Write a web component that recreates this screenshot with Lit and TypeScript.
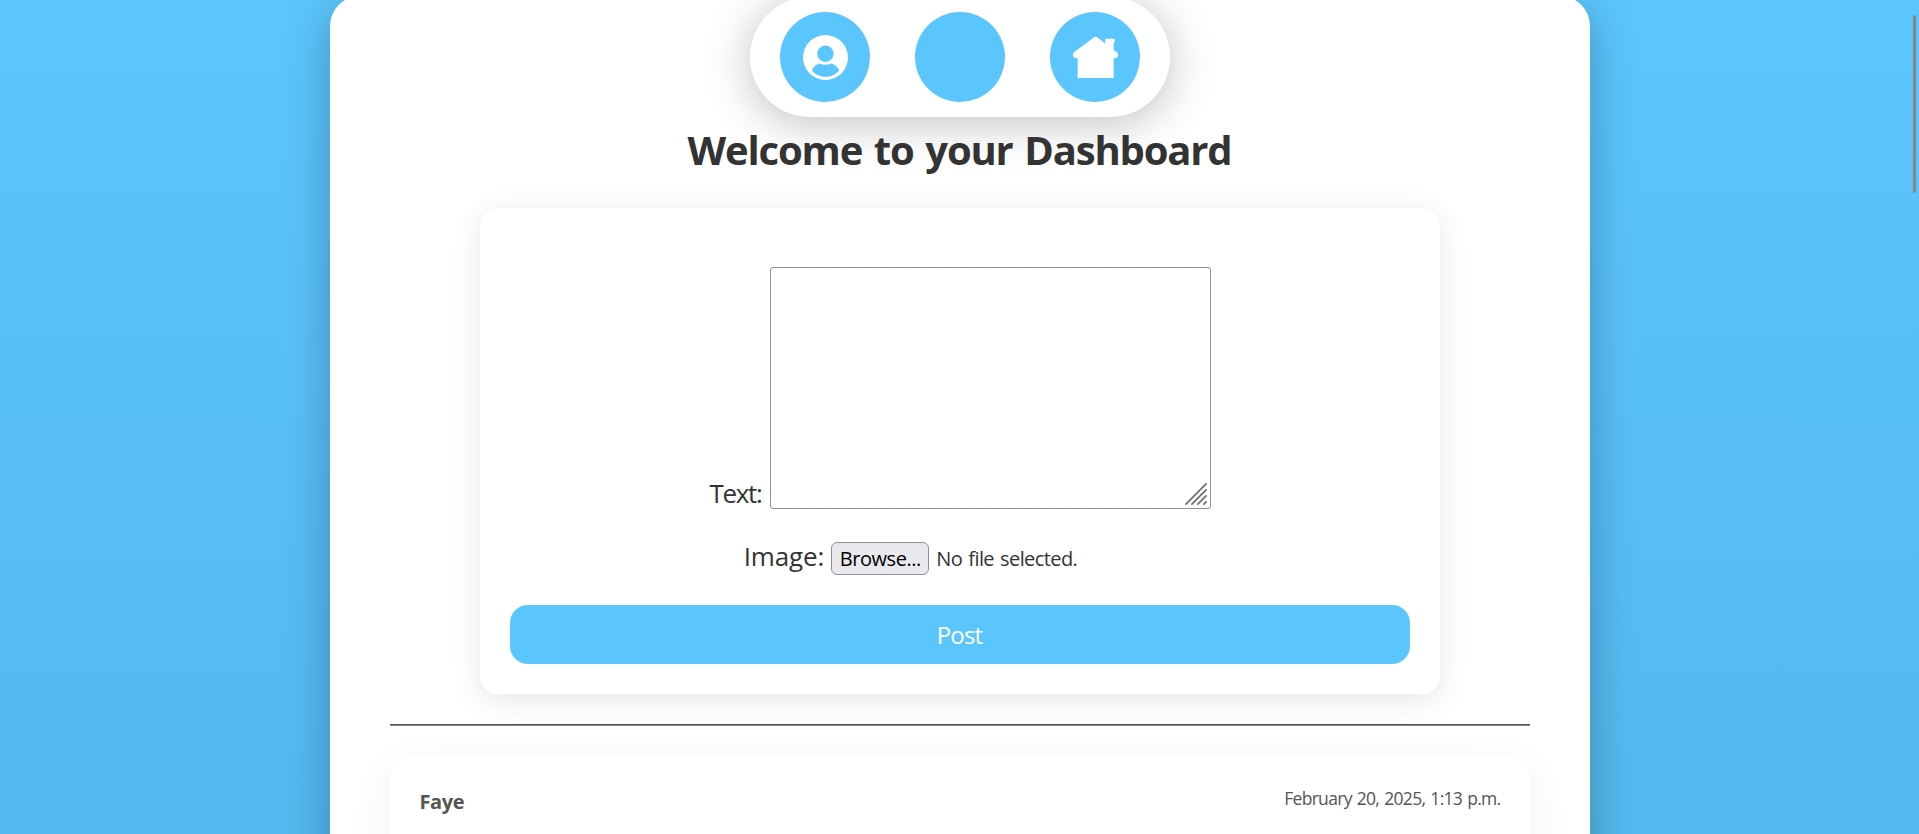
import { LitElement, html, css } from 'lit';
import { customElement } from 'lit/decorators.js';

@customElement('app-root')
export class AppRoot extends LitElement {
  static styles = css`
    :host {
      display: flow-root;
      position: relative;
      height: 834px;
      overflow: hidden;
      background: linear-gradient(#5bc6fd, #53b9ee);
      font-family: 'Open Sans', 'Noto Sans', sans-serif;
      color: #333;
    }
    * { box-sizing: border-box; }
    .page {
      width: 1260px;
      height: 1200px;
      margin: -4px auto 0;
      padding: 127px 60px 0;
      background: #fff;
      border-radius: 30px;
      box-shadow: 0 12px 45px rgba(0, 0, 0, 0.27);
    }
    nav {
      position: absolute;
      z-index: 0;
      top: -3px;
      left: 50%;
      width: 420px;
      height: 120px;
      margin-left: -210px;
      padding: 15px 30px;
      display: flex;
      justify-content: space-between;
      border-radius: 60px;
      background: #fff;
      box-shadow: 0 6px 45px rgba(0, 0, 0, 0.25);
    }
    .nav-link {
      width: 90px;
      height: 90px;
      padding: 1px 0 0 1px;
      border-radius: 50%;
      background: #5bc6fd;
      display: grid;
      place-items: center;
    }
    .nav-link svg { width: 45px; height: 45px; }
    h1 {
      position: relative;
      z-index: 1;
      margin: 0 0 31px;
      font-size: 40px;
      line-height: 54px;
      letter-spacing: -1.17px;
      word-spacing: 2.5px;
      font-weight: 700;
      text-align: center;
    }
    .composer {
      position: relative;
      width: 960px;
      height: 486px;
      margin: 0 auto;
      padding: 59px 30px 30px;
      border-radius: 18px;
      background: #fff;
      box-shadow: 0 6px 30px rgba(0, 0, 0, 0.1);
    }
    .row { display: flex; justify-content: center; }
    .text-row { align-items: flex-end; gap: 8px; padding-left: 1px; }
    .label { font-size: 26px; line-height: 36px; white-space: nowrap; }
    .text-label { letter-spacing: -1.3px; margin-bottom: -2px; }
    .area { position: relative; width: 441px; height: 242px; }
    textarea {
      display: block;
      width: 100%;
      height: 100%;
      resize: none;
      border: 1px solid #8f8f9d;
      border-radius: 3px;
      background: #fff;
      outline: none;
    }
    .grip { position: absolute; right: 4px; bottom: 4px; width: 22px; height: 22px; }
    .file-row { margin-top: 33px; height: 33px; padding-left: 2px; gap: 7px; align-items: center; }
    .image-label { letter-spacing: -0.1px; padding-bottom: 5px; }
    .file { width: 346px; display: flex; align-items: center; gap: 7px; font-size: 20px; letter-spacing: -0.45px; line-height: 31px; }
    .file-name { letter-spacing: -0.6px; word-spacing: 1.5px; }
    .browse {
      width: 98px;
      height: 33px;
      padding: 0;
      border: 1px solid #8f8f9d;
      border-radius: 6px;
      background: #e9e9ed;
      color: #000;
      font: inherit;
      letter-spacing: inherit;
    }
    .submit {
      display: block;
      width: 100%;
      height: 59px;
      margin-top: 30px;
      padding: 0;
      border: 0;
      border-radius: 18px;
      background: #5bc6fd;
      color: #fff;
      font: 24px/59px 'Open Sans', 'Noto Sans', sans-serif;
      letter-spacing: -0.8px;
    }
    .divider { height: 2px; margin: 30px 0; background: #888; border-top: 1px solid #555; }
    .post {
      display: flex;
      justify-content: space-between;
      align-items: flex-start;
      height: 400px;
      padding: 30px 29px 30px 30px;
      border-radius: 20px;
      background: #fff;
      box-shadow: 0 12px 45px rgba(0, 0, 0, 0.06);
      color: #555;
    }
    .author { font-size: 20px; line-height: 32px; letter-spacing: -0.4px; font-weight: 700; }
    .date { font-size: 17.5px; line-height: 24px; letter-spacing: -0.7px; word-spacing: 1.2px; }
    .scroll-thumb {
      position: absolute;
      top: 15px;
      right: 3px;
      width: 3px;
      height: 178px;
      border-radius: 2px;
      background: #878787;
    }
  `;

  render() {
    return html`
      <main class="page">
        <h1>Welcome to your Dashboard</h1>
        <section class="composer">
          <div class="row text-row">
            <span class="label text-label">Text:</span>
            <div class="area">
              <textarea aria-label="Text"></textarea>
              <svg class="grip" viewBox="0 0 23 23" fill="none" stroke="#6d6d6d" stroke-width="1.8" stroke-linecap="round">
                <path d="M1 22 22 1M7.2 22 22 7.2M13.4 22 22 13.4M19.8 22 22 19.8" />
              </svg>
            </div>
          </div>
          <div class="row file-row">
            <span class="label image-label">Image:</span>
            <div class="file">
              <button class="browse">Browse...</button>
              <span class="file-name">No file selected.</span>
            </div>
          </div>
          <button class="submit">Post</button>
        </section>
        <div class="divider"></div>
        <article class="post">
          <span class="author">Faye</span>
          <span class="date">February 20, 2025, 1:13 p.m.</span>
        </article>
      </main>
      <nav>
        <a class="nav-link">
          <svg viewBox="0 0 45 45">
            <circle cx="22.5" cy="22.5" r="22.5" fill="#fff" />
            <circle cx="22.4" cy="18.8" r="8.2" fill="#5bc6fd" />
            <path fill="#5bc6fd" d="M8.8 35.2C10.4 32 13 29.2 16.4 28.4Q22.5 31 28.6 28.4C32 29.2 34.6 32 36.2 35.2C33 39.4 28 41.8 22.5 41.8S12 39.4 8.8 35.2Z" />
          </svg>
        </a>
        <a class="nav-link"></a>
        <a class="nav-link">
          <svg viewBox="24 22 135 135" fill="#fff">
            <path d="M88 28Q91.500 25 95 28L122 48.500V45Q120 43 120 39V36Q120 33 124 33H146Q149.500 33 149.500 36V41Q149.500 44 146 45.500V67L156 74Q160 78 159 84Q156 92 146 92V151H38V92Q26 92 24 84Q23 77 28 73Z" />
          </svg>
        </a>
      </nav>
      <div class="scroll-thumb"></div>
    `;
  }
}
